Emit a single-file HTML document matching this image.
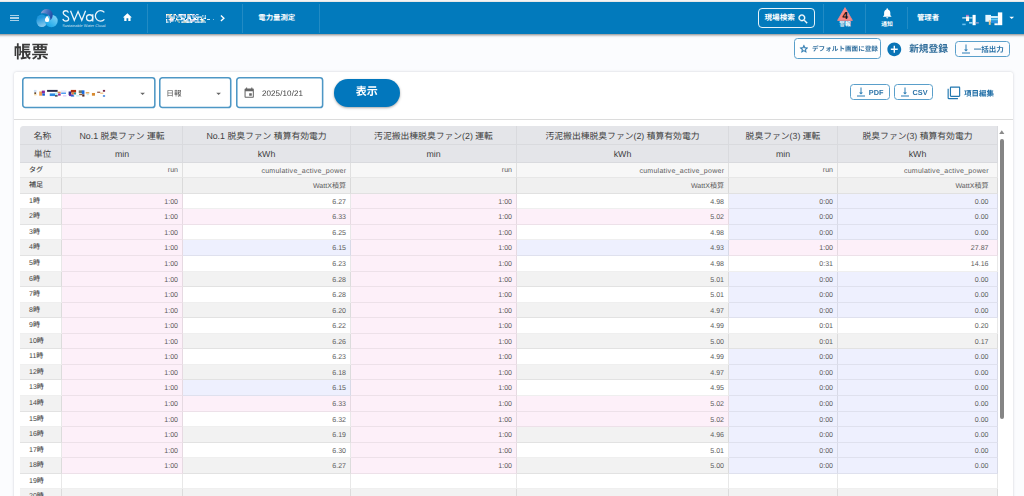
<!DOCTYPE html>
<html lang="ja"><head><meta charset="utf-8"><title>帳票</title><style>
html,body{margin:0;padding:0}
body{text-rendering:geometricPrecision;width:1024px;height:496px;overflow:hidden;position:relative;background:#fbfcfe;font-family:"Liberation Sans","Noto Sans CJK JP",sans-serif;color:#333}
#pg{position:absolute;left:-12px;top:-12px;width:1048px;height:520px;overflow:hidden;filter:blur(.45px)}
#in{position:absolute;left:12px;top:12px;width:1024px;height:496px}
.a{position:absolute;box-sizing:border-box}
.ic{position:absolute;display:block;overflow:visible}
.cj{display:inline-block;overflow:visible;flex:none;white-space:nowrap;line-height:1.2;font-family:"Liberation Sans","Noto Sans CJK JP",sans-serif}
.h{font-size:0;color:transparent}
.w{white-space:nowrap;line-height:1.2}
.c{display:flex;align-items:center;justify-content:center;white-space:nowrap}
#hs{left:-20px;top:2.4px;width:1064px;height:31.2px;background:#027abc;box-shadow:0 1px 2.6px rgba(0,0,0,.5)}
#hdr{left:0;top:2.4px;width:1024px;height:31.2px;background:#027abc}
#hdr>*{margin-top:-2.4px}
#swac{font-size:16.2px;color:#fff;letter-spacing:-.55px;line-height:18px;white-space:nowrap}
#swsub{font-size:3.9px;color:rgba(255,255,255,.8);line-height:4px;white-space:nowrap;letter-spacing:.02px}
.btn{border:1px solid #5a9fca;border-radius:3.5px}
.th{padding-top:1px;background:#e4e5e9;border-right:1px solid #d9dade;border-bottom:1px solid #d9dade;color:#3f3f3f;font-size:8.9px}
.td{display:flex;align-items:center;justify-content:flex-end;white-space:nowrap;padding:2.2px 4px 0 0;font-size:7.05px;color:#5c5c5c;border-right:1px solid rgba(0,0,0,.085);border-bottom:1px solid rgba(0,0,0,.062)}
.td.l{justify-content:flex-start;padding:2.2px 0 0 9px;color:#484848}
.td.z{padding-right:8.5px}
.tg{letter-spacing:.25px;margin-right:-.25px}
</style></head>
<body>
<div id="pg"><div id="in">
<div class="a" style="left:-12.00px;top:-12.00px;width:1048.00px;height:14.40px;background:#f8f8f8"></div>
<div id="hs" class="a"></div>
<div id="hdr" class="a"><div class="a" style="left:9.80px;top:14.90px;width:9.00px;height:1.20px;background:rgba(255,255,255,.66)"></div><div class="a" style="left:9.80px;top:17.35px;width:9.00px;height:1.20px;background:rgba(255,255,255,.66)"></div><div class="a" style="left:9.80px;top:19.80px;width:9.00px;height:1.20px;background:rgba(255,255,255,.66)"></div><svg class="ic" style="left:34px;top:6px" width="28" height="24" viewBox="0 0 28 24">
<defs>
<linearGradient id="lg1" x1="0" y1="0" x2="1" y2="0.3"><stop offset="0" stop-color="#9fb0dc"/><stop offset="0.55" stop-color="#4876c4"/><stop offset="1" stop-color="#2450a8"/></linearGradient>
<linearGradient id="lg2" x1="0.3" y1="0" x2="0.6" y2="1"><stop offset="0.25" stop-color="#1f97dc"/><stop offset="1" stop-color="#8fcdef"/></linearGradient>
<linearGradient id="lg3" x1="1" y1="0" x2="0.2" y2="1"><stop offset="0" stop-color="#8fd8f8"/><stop offset="1" stop-color="#12a4e8"/></linearGradient>
</defs>
<ellipse cx="7.8" cy="14.7" rx="5.4" ry="6.3" fill="url(#lg2)"/>
<ellipse cx="17.3" cy="15" rx="6.4" ry="6.2" fill="url(#lg3)"/>
<path d="M6.8 7.5C7.6 4.6 10.2 3 12.9 3.1C16.6 3.3 19 6.2 18.7 9.6C18.5 11.6 17.6 13.2 16.3 14.2C16.6 11.6 15.6 9.6 13.6 8.4C11.6 7.2 9 7 6.8 7.5Z" fill="url(#lg1)"/>
<path d="M13.05 9.8C14.1 11.6 15.2 12.6 15.2 13.9A2.15 2.2 0 0 1 10.9 13.9C10.9 12.6 12 11.6 13.05 9.8Z" fill="#fff"/>
</svg><svg class="ic" style="left:60px;top:6px" width="48" height="18" viewBox="0 0 48 18" fill="none" stroke="#eaf4fb" stroke-width="1.3" stroke-linecap="butt" stroke-linejoin="miter" aria-label="SWaC">
<path d="M8.4 6.6C8 5.4 7 4.75 5.7 4.75C4.2 4.75 3.2 5.75 3.2 7.1C3.2 8.6 4.4 9.2 5.9 9.9C7.5 10.6 8.7 11.3 8.7 12.8C8.7 14.2 7.5 15.05 5.8 15.05C4.3 15.05 3.2 14.2 2.9 12.8"/>
<path d="M10.5 4.7L14.3 14.2L18.05 5.6L21.8 14.2L25.6 4.7"/>
<circle cx="29.6" cy="11.85" r="3.1"/><path d="M32.75 8.3V15.4"/>
<path d="M44.4 6.4A5.2 5.2 0 1 0 44.4 13.4"/>
</svg><span class="h">SWaC</span><div class="a" id="swsub" style="left:62.2px;top:23.6px">Sustainable Water Cloud</div><svg class="ic" style="left:121.60px;top:12.45px" width="10.80" height="10.80" viewBox="0 0 24 24" fill="#fff" ><path d="M10 20v-6h4v6h5v-8h3L12 3 2 12h3v8z"/></svg><div class="a" style="left:147.10px;top:3.50px;width:1.00px;height:29.00px;background:rgba(255,255,255,.13)"></div><div class="a" style="left:242.30px;top:3.50px;width:1.00px;height:29.00px;background:rgba(255,255,255,.13)"></div><div class="a" style="left:319.00px;top:3.50px;width:1.00px;height:29.00px;background:rgba(255,255,255,.13)"></div><div class="a" style="left:823.30px;top:3.50px;width:1.00px;height:29.00px;background:rgba(255,255,255,.13)"></div><div class="a" style="left:865.10px;top:3.50px;width:1.00px;height:29.00px;background:rgba(255,255,255,.13)"></div><div class="a" style="left:907.10px;top:7.00px;width:1.00px;height:22.30px;background:rgba(255,255,255,.13)"></div><svg class="ic" style="left:166px;top:14.4px" width="40" height="9.4"><rect x="0.00" y="0.00" width="2.50" height="1.25" fill="#fff"/><rect x="1.25" y="0.00" width="2.50" height="1.25" fill="#f4e6b8"/><rect x="3.75" y="0.00" width="1.25" height="1.25" fill="#f4e6b8"/><rect x="5.00" y="0.00" width="1.25" height="1.25" fill="#fff"/><rect x="7.50" y="0.00" width="2.50" height="1.25" fill="#f4e6b8"/><rect x="8.75" y="0.00" width="1.25" height="1.25" fill="#fff"/><rect x="12.50" y="0.00" width="2.50" height="1.25" fill="#fff"/><rect x="15.00" y="0.00" width="2.50" height="1.25" fill="#fff"/><rect x="16.25" y="0.00" width="1.25" height="1.25" fill="#e4f1fa"/><rect x="17.50" y="0.00" width="2.50" height="1.25" fill="#f6d9ec"/><rect x="21.25" y="0.00" width="2.50" height="1.25" fill="#f4e6b8"/><rect x="23.75" y="0.00" width="1.25" height="1.25" fill="#fff"/><rect x="25.00" y="0.00" width="1.25" height="1.25" fill="#fff"/><rect x="26.25" y="0.00" width="2.50" height="1.25" fill="#f6d9ec"/><rect x="30.00" y="0.00" width="1.25" height="1.25" fill="#bfe0f4"/><rect x="31.25" y="0.00" width="1.25" height="1.25" fill="#fff"/><rect x="0.00" y="1.25" width="1.25" height="1.25" fill="#fff"/><rect x="2.50" y="1.25" width="2.50" height="1.25" fill="#e4f1fa"/><rect x="3.75" y="1.25" width="1.25" height="1.25" fill="#f4e6b8"/><rect x="7.50" y="1.25" width="1.25" height="1.25" fill="#f6d9ec"/><rect x="10.00" y="1.25" width="1.25" height="1.25" fill="#f6d9ec"/><rect x="12.50" y="1.25" width="2.50" height="1.25" fill="#fff"/><rect x="13.75" y="1.25" width="2.50" height="1.25" fill="#bfe0f4"/><rect x="17.50" y="1.25" width="1.25" height="1.25" fill="#fff"/><rect x="18.75" y="1.25" width="1.25" height="1.25" fill="#fff"/><rect x="21.25" y="1.25" width="1.25" height="1.25" fill="#f6d9ec"/><rect x="22.50" y="1.25" width="1.25" height="1.25" fill="#fff"/><rect x="26.25" y="1.25" width="1.25" height="1.25" fill="#fff"/><rect x="28.75" y="1.25" width="1.25" height="1.25" fill="#f6d9ec"/><rect x="36.25" y="1.25" width="1.25" height="1.25" fill="#fff"/><rect x="38.75" y="1.25" width="1.25" height="1.25" fill="#e4f1fa"/><rect x="0.00" y="2.50" width="1.25" height="1.25" fill="#f6d9ec"/><rect x="2.50" y="2.50" width="1.25" height="1.25" fill="#fff"/><rect x="3.75" y="2.50" width="2.50" height="1.25" fill="#bfe0f4"/><rect x="5.00" y="2.50" width="2.50" height="1.25" fill="#bfe0f4"/><rect x="7.50" y="2.50" width="1.25" height="1.25" fill="#fff"/><rect x="11.25" y="2.50" width="1.25" height="1.25" fill="#e4f1fa"/><rect x="13.75" y="2.50" width="2.50" height="1.25" fill="#bfe0f4"/><rect x="15.00" y="2.50" width="1.25" height="1.25" fill="#bfe0f4"/><rect x="18.75" y="2.50" width="1.25" height="1.25" fill="#fff"/><rect x="21.25" y="2.50" width="2.50" height="1.25" fill="#fff"/><rect x="22.50" y="2.50" width="1.25" height="1.25" fill="#e4f1fa"/><rect x="23.75" y="2.50" width="1.25" height="1.25" fill="#f6d9ec"/><rect x="26.25" y="2.50" width="2.50" height="1.25" fill="#bfe0f4"/><rect x="30.00" y="2.50" width="1.25" height="1.25" fill="#fff"/><rect x="31.25" y="2.50" width="2.50" height="1.25" fill="#fff"/><rect x="33.75" y="2.50" width="1.25" height="1.25" fill="#fff"/><rect x="35.00" y="2.50" width="1.25" height="1.25" fill="#bfe0f4"/><rect x="38.75" y="2.50" width="1.25" height="1.25" fill="#bfe0f4"/><rect x="3.75" y="3.75" width="1.25" height="1.25" fill="#f6d9ec"/><rect x="5.00" y="3.75" width="1.25" height="1.25" fill="#f4e6b8"/><rect x="6.25" y="3.75" width="1.25" height="1.25" fill="#e4f1fa"/><rect x="7.50" y="3.75" width="1.25" height="1.25" fill="#fff"/><rect x="10.00" y="3.75" width="1.25" height="1.25" fill="#f4e6b8"/><rect x="15.00" y="3.75" width="2.50" height="1.25" fill="#fff"/><rect x="16.25" y="3.75" width="1.25" height="1.25" fill="#e4f1fa"/><rect x="17.50" y="3.75" width="1.25" height="1.25" fill="#fff"/><rect x="21.25" y="3.75" width="1.25" height="1.25" fill="#fff"/><rect x="22.50" y="3.75" width="2.50" height="1.25" fill="#fff"/><rect x="27.50" y="3.75" width="2.50" height="1.25" fill="#fff"/><rect x="28.75" y="3.75" width="1.25" height="1.25" fill="#fff"/><rect x="31.25" y="3.75" width="1.25" height="1.25" fill="#fff"/><rect x="35.00" y="3.75" width="1.25" height="1.25" fill="#f4e6b8"/><rect x="37.50" y="3.75" width="1.25" height="1.25" fill="#fff"/><rect x="38.75" y="3.75" width="1.25" height="1.25" fill="#fff"/><rect x="0.00" y="5.00" width="1.25" height="1.25" fill="#fff"/><rect x="2.50" y="5.00" width="2.50" height="1.25" fill="#f6d9ec"/><rect x="3.75" y="5.00" width="1.25" height="1.25" fill="#fff"/><rect x="5.00" y="5.00" width="2.50" height="1.25" fill="#f6d9ec"/><rect x="6.25" y="5.00" width="1.25" height="1.25" fill="#fff"/><rect x="10.00" y="5.00" width="1.25" height="1.25" fill="#fff"/><rect x="11.25" y="5.00" width="1.25" height="1.25" fill="#fff"/><rect x="12.50" y="5.00" width="1.25" height="1.25" fill="#bfe0f4"/><rect x="13.75" y="5.00" width="1.25" height="1.25" fill="#bfe0f4"/><rect x="15.00" y="5.00" width="1.25" height="1.25" fill="#e4f1fa"/><rect x="16.25" y="5.00" width="1.25" height="1.25" fill="#bfe0f4"/><rect x="17.50" y="5.00" width="1.25" height="1.25" fill="#fff"/><rect x="20.00" y="5.00" width="1.25" height="1.25" fill="#fff"/><rect x="21.25" y="5.00" width="1.25" height="1.25" fill="#f6d9ec"/><rect x="23.75" y="5.00" width="1.25" height="1.25" fill="#fff"/><rect x="25.00" y="5.00" width="1.25" height="1.25" fill="#bfe0f4"/><rect x="26.25" y="5.00" width="2.50" height="1.25" fill="#f6d9ec"/><rect x="27.50" y="5.00" width="1.25" height="1.25" fill="#fff"/><rect x="28.75" y="5.00" width="2.50" height="1.25" fill="#fff"/><rect x="31.25" y="5.00" width="1.25" height="1.25" fill="#fff"/><rect x="33.75" y="5.00" width="2.50" height="1.25" fill="#e4f1fa"/><rect x="35.00" y="5.00" width="2.50" height="1.25" fill="#fff"/><rect x="0.00" y="6.25" width="1.25" height="1.25" fill="#fff"/><rect x="3.75" y="6.25" width="2.50" height="1.25" fill="#fff"/><rect x="5.00" y="6.25" width="1.25" height="1.25" fill="#f6d9ec"/><rect x="6.25" y="6.25" width="1.25" height="1.25" fill="#fff"/><rect x="8.75" y="6.25" width="1.25" height="1.25" fill="#bfe0f4"/><rect x="11.25" y="6.25" width="1.25" height="1.25" fill="#f4e6b8"/><rect x="17.50" y="6.25" width="2.50" height="1.25" fill="#fff"/><rect x="18.75" y="6.25" width="2.50" height="1.25" fill="#fff"/><rect x="21.25" y="6.25" width="1.25" height="1.25" fill="#fff"/><rect x="23.75" y="6.25" width="1.25" height="1.25" fill="#fff"/><rect x="25.00" y="6.25" width="2.50" height="1.25" fill="#f6d9ec"/><rect x="26.25" y="6.25" width="2.50" height="1.25" fill="#f6d9ec"/><rect x="31.25" y="6.25" width="1.25" height="1.25" fill="#f6d9ec"/><rect x="35.00" y="6.25" width="2.50" height="1.25" fill="#f4e6b8"/><rect x="36.25" y="6.25" width="1.25" height="1.25" fill="#fff"/><rect x="37.50" y="6.25" width="1.25" height="1.25" fill="#f4e6b8"/><rect x="0.00" y="7.50" width="1.25" height="1.25" fill="#fff"/><rect x="1.25" y="7.50" width="1.25" height="1.25" fill="#fff"/><rect x="3.75" y="7.50" width="1.25" height="1.25" fill="#e4f1fa"/><rect x="12.50" y="7.50" width="1.25" height="1.25" fill="#f4e6b8"/><rect x="15.00" y="7.50" width="2.50" height="1.25" fill="#bfe0f4"/><rect x="16.25" y="7.50" width="1.25" height="1.25" fill="#fff"/><rect x="17.50" y="7.50" width="2.50" height="1.25" fill="#f4e6b8"/><rect x="20.00" y="7.50" width="2.50" height="1.25" fill="#fff"/><rect x="21.25" y="7.50" width="2.50" height="1.25" fill="#fff"/><rect x="23.75" y="7.50" width="2.50" height="1.25" fill="#fff"/><rect x="25.00" y="7.50" width="1.25" height="1.25" fill="#fff"/><rect x="28.75" y="7.50" width="1.25" height="1.25" fill="#e4f1fa"/><rect x="30.00" y="7.50" width="1.25" height="1.25" fill="#e4f1fa"/><rect x="31.25" y="7.50" width="2.50" height="1.25" fill="#fff"/><rect x="33.75" y="7.50" width="1.25" height="1.25" fill="#bfe0f4"/><rect x="35.00" y="7.50" width="1.25" height="1.25" fill="#fff"/><rect x="36.25" y="7.50" width="1.25" height="1.25" fill="#e4f1fa"/><rect x="37.50" y="7.50" width="1.25" height="1.25" fill="#bfe0f4"/><rect x="38.75" y="7.50" width="1.25" height="1.25" fill="#bfe0f4"/></svg><div class="a" style="left:206.80px;top:18.70px;width:3.20px;height:1.20px;background:rgba(255,255,255,.85)"></div><div class="a" style="left:212.60px;top:18.70px;width:1.20px;height:1.20px;background:rgba(255,255,255,.5)"></div><svg class="ic" style="left:219px;top:14px" width="8" height="9" viewBox="0 0 8 9"><path d="M1.9 1.5L4.9 4.2L1.9 6.9" fill="none" stroke="#fff" stroke-width="1.35"/></svg><div class="a c" style="left:243.00px;top:2.90px;width:67.50px;height:31.20px;"><span class="cj" style="font-size:7.4px;color:#fff;font-weight:bold">電力量測定</span></div><div class="a" style="left:757.80px;top:7.90px;width:57.00px;height:19.90px;border:1px solid rgba(255,255,255,.9);border-radius:4px;box-sizing:border-box"></div><div class="a c" style="left:764.40px;top:7.90px;width:30.60px;height:19.90px;"><span class="cj" style="font-size:7.6px;color:#fff;font-weight:bold">現場検索</span></div><svg class="ic" style="left:796.50px;top:12.66px" width="12.30" height="12.30" viewBox="0 0 24 24" fill="#fff" stroke="#fff" stroke-width=".7"><path d="M15.5 14h-.79l-.28-.27C15.41 12.59 16 11.11 16 9.5 16 5.91 13.09 3 9.5 3S3 5.91 3 9.5 5.91 16 9.5 16c1.61 0 3.09-.59 4.23-1.57l.27.28v.79l5 4.99L20.49 19l-4.99-5zm-6 0C7.01 14 5 11.99 5 9.5S7.01 5 9.5 5 14 7.01 14 9.5 11.99 14 9.5 14z"/></svg><svg class="ic" style="left:836px;top:6px" width="18" height="16" viewBox="0 0 18 16"><path d="M9 1.6L16.4 14.4H1.6Z" fill="#f88888" stroke="#f88888" stroke-width="0.8" stroke-linejoin="round"/></svg><div class="a c" style="left:836.00px;top:10.50px;width:18.00px;height:11.60px;"><b style="font-size:10.3px;color:#111">4</b></div><div class="a c" style="left:830.00px;top:22.30px;width:30.00px;height:7.00px;"><span class="cj" style="font-size:5.8px;color:#fff;font-weight:bold">警報</span></div><svg class="ic" style="left:880.80px;top:7.30px" width="12.45" height="12.45" viewBox="0 0 24 24" fill="#fff" ><path d="M12 22c1.1 0 2-.9 2-2h-4c0 1.1.89 2 2 2zm6-6v-5c0-3.07-1.64-5.64-4.5-6.32V4c0-.83-.67-1.5-1.5-1.5s-1.5.67-1.5 1.5v.68C7.63 5.36 6 7.92 6 11v5l-2 2v1h16v-1l-2-2z"/></svg><div class="a c" style="left:872.00px;top:22.30px;width:30.00px;height:7.00px;"><span class="cj" style="font-size:5.8px;color:#fff;font-weight:bold">通知</span></div><div class="a c" style="left:912.00px;top:2.40px;width:32.00px;height:31.20px;"><span class="cj" style="font-size:7.4px;color:#fff;font-weight:bold">管理者</span></div><svg class="ic" style="left:958px;top:10px;filter:blur(0.35px)" width="48" height="18"><rect x="8.00" y="4.88" width="2.81" height="1.56" fill="#c070c0"/><rect x="4.25" y="7.06" width="3.75" height="1.56" fill="#a8d8f0"/><rect x="8.00" y="6.44" width="3.12" height="4.69" fill="#fff8f0"/><rect x="11.12" y="7.06" width="3.44" height="1.56" fill="#8ad0f0"/><rect x="14.56" y="4.88" width="3.12" height="10.31" fill="#fff"/><rect x="11.12" y="12.06" width="3.44" height="1.56" fill="#a0d8f5"/><rect x="17.69" y="12.06" width="3.12" height="1.56" fill="#8a9ac8"/><rect x="4.25" y="13.62" width="3.44" height="1.56" fill="#6ac0f0"/><rect x="27.38" y="4.88" width="5.62" height="6.88" fill="#e6f5ff"/><rect x="33.00" y="6.00" width="6.88" height="2.00" fill="#d0ecfa"/><rect x="33.00" y="8.50" width="6.88" height="2.00" fill="#60c8f8"/><rect x="33.00" y="11.00" width="6.88" height="2.00" fill="#2a90e0"/><rect x="39.88" y="2.38" width="4.38" height="12.81" fill="#fff"/><rect x="36.44" y="13.31" width="3.44" height="1.88" fill="#fff"/><rect x="30.81" y="10.19" width="1.88" height="4.69" fill="#e8c890"/></svg><svg class="ic" style="left:1006.40px;top:12.20px" width="11.40" height="11.40" viewBox="0 0 24 24" fill="#fff" ><path d="M7 10l5 5 5-5z"/></svg></div>
<div class="a" style="left:13.7px;top:39.8px;height:24px;line-height:24px;white-space:nowrap"><span class="cj" style="font-size:17.5px;color:#3a3a3a;font-weight:bold;line-height:24px">帳票</span></div>
<div class="a btn" style="left:793.60px;top:38.00px;width:87.70px;height:21.40px;background:#fff"></div>
<svg class="ic" style="left:799.20px;top:43.90px" width="9.80" height="9.80" viewBox="0 0 24 24" fill="#2373ab" stroke="#2373ab" stroke-width=".8"><path d="M22 9.24l-7.19-.62L12 2 9.19 8.63 2 9.24l5.46 4.73L5.82 21 12 17.27 18.18 21l-1.63-7.03L22 9.24zM12 15.4l-3.76 2.27 1-4.28-3.32-2.88 4.38-.38L12 6.1l1.71 4.04 4.38.38-3.32 2.88 1 4.28L12 15.4z"/></svg>
<div class="a c" style="left:811.00px;top:38.80px;width:68.00px;height:21.40px;"><span class="cj" style="font-size:6.6px;color:#3472a0;font-weight:bold">デフォルト画面に登録</span></div>
<svg class="ic" style="left:885.90px;top:40.50px" width="16.60" height="16.60" viewBox="0 0 24 24" fill="#0a74b6" ><path d="M12 2C6.48 2 2 6.48 2 12s4.48 10 10 10 10-4.48 10-10S17.52 2 12 2zm5 11h-4v4h-2v-4H7v-2h4V7h2v4h4v2z"/></svg>
<div class="a c" style="left:907.00px;top:38.60px;width:43.00px;height:22.40px;"><span class="cj" style="font-size:9.7px;color:#316e9b;font-weight:bold">新規登録</span></div>
<div class="a btn" style="left:954.80px;top:41.30px;width:55.50px;height:15.80px;"></div>
<svg class="ic" style="left:960.30px;top:42.90px" width="12.00" height="12.00" viewBox="0 0 24 24" fill="#2b7db5" ><path d="M16 13h-3V3h-2v10H8l4 4 4-4zM4 19v2h16v-2H4z"/></svg>
<div class="a c" style="left:972.00px;top:41.70px;width:33.60px;height:15.80px;"><span class="cj" style="font-size:7.5px;color:#2d74a8;font-weight:bold">一括出力</span></div>
<div class="a" style="left:13.80px;top:71.50px;width:999.10px;height:448.50px;background:#fff;border-radius:2.5px;box-shadow:0 0 2.5px rgba(60,70,90,.26)"></div>
<svg class="ic" style="left:21.90px;top:77.15px" width="133.60" height="31.30"><rect x="0.78" y="0.78" width="132.05" height="29.75" rx="2.6" fill="none" stroke="#4e97c5" stroke-width="1.55"/></svg>
<svg class="ic" style="left:30px;top:86px;filter:blur(0.35px)" width="80" height="14"><rect x="3.91" y="3.91" width="2.64" height="2.46" fill="#cfe0f5"/><rect x="4.35" y="6.37" width="1.76" height="1.58" fill="#5a3a20"/><rect x="4.08" y="7.95" width="2.46" height="1.41" fill="#f5d9a0"/><rect x="9.18" y="5.49" width="2.81" height="4.22" fill="#f0a050"/><rect x="11.82" y="4.61" width="3.08" height="2.81" fill="#8a2a9a"/><rect x="12.26" y="7.42" width="2.64" height="2.28" fill="#1a5fd0"/><rect x="17.09" y="3.91" width="10.54" height="1.93" fill="#2a2a4a"/><rect x="19.73" y="7.42" width="5.27" height="2.64" fill="#2a8ae0"/><rect x="25.00" y="6.54" width="2.64" height="2.64" fill="#b0f0f8"/><rect x="25.00" y="9.18" width="2.64" height="1.41" fill="#334"/><rect x="27.63" y="5.67" width="3.08" height="1.41" fill="#e09040"/><rect x="28.07" y="7.42" width="2.64" height="2.20" fill="#a02a90"/><rect x="30.71" y="4.35" width="5.71" height="2.20" fill="#e8e8f8"/><rect x="31.15" y="6.54" width="4.83" height="1.41" fill="#4a9af0"/><rect x="32.91" y="9.18" width="3.51" height="1.32" fill="#e0d0f8"/><rect x="40.82" y="3.91" width="5.27" height="2.64" fill="#b03010"/><rect x="38.62" y="5.49" width="2.64" height="3.69" fill="#2a2a8a"/><rect x="41.52" y="6.37" width="2.37" height="2.11" fill="#e08030"/><rect x="43.89" y="6.54" width="2.20" height="1.93" fill="#2a9a9a"/><rect x="39.06" y="8.48" width="4.39" height="1.58" fill="#7a2aa0"/><rect x="40.82" y="9.36" width="3.34" height="1.23" fill="#1a7ae0"/><rect x="48.72" y="4.35" width="3.51" height="2.72" fill="#6a7a6a"/><rect x="51.80" y="4.35" width="2.64" height="3.60" fill="#1a6ae0"/><rect x="49.16" y="7.78" width="3.08" height="1.41" fill="#8a5a3a"/><rect x="52.24" y="8.30" width="2.20" height="2.28" fill="#4a2a2a"/><rect x="46.26" y="9.18" width="3.34" height="1.32" fill="#c0f0f8"/><rect x="55.75" y="6.11" width="3.51" height="1.41" fill="#e0a050"/><rect x="56.63" y="7.86" width="2.20" height="1.32" fill="#c0e8f0"/><rect x="61.91" y="6.98" width="3.08" height="2.72" fill="#d88a30"/><rect x="67.18" y="5.67" width="3.08" height="1.14" fill="#8a4a3a"/><rect x="70.25" y="6.54" width="3.08" height="1.41" fill="#f5c890"/><rect x="72.89" y="3.91" width="2.20" height="1.85" fill="#7a2a4a"/><rect x="72.89" y="9.18" width="2.20" height="1.58" fill="#4a8ae0"/></svg>
<svg class="ic" style="left:136.60px;top:87.60px" width="11.20" height="11.20" viewBox="0 0 24 24" fill="#666" ><path d="M7 10l5 5 5-5z"/></svg>
<svg class="ic" style="left:159.40px;top:77.15px" width="72.50" height="31.30"><rect x="0.78" y="0.78" width="70.95" height="29.75" rx="2.6" fill="none" stroke="#4e97c5" stroke-width="1.55"/></svg>
<div class="a" style="left:166.30px;top:78.20px;width:33.70px;height:30.50px;display:flex;align-items:center"><span class="cj" style="font-size:7.6px;color:#444">日報</span></div>
<svg class="ic" style="left:212.80px;top:87.60px" width="11.20" height="11.20" viewBox="0 0 24 24" fill="#666" ><path d="M7 10l5 5 5-5z"/></svg>
<svg class="ic" style="left:235.70px;top:77.15px" width="87.40" height="31.30"><rect x="0.78" y="0.78" width="85.85" height="29.75" rx="2.6" fill="none" stroke="#4e97c5" stroke-width="1.55"/></svg>
<svg class="ic" style="left:243.00px;top:86.60px" width="12.40" height="12.40" viewBox="0 0 24 24" fill="#666" ><path d="M17 12h-5v5h5v-5zM16 1v2H8V1H6v2H5c-1.11 0-1.99.9-1.99 2L3 19c0 1.1.89 2 2 2h14c1.1 0 2-.9 2-2V5c0-1.1-.9-2-2-2h-1V1h-2zm3 18H5V8h14v11z"/></svg>
<div class="a" style="left:261.90px;top:78.40px;width:48.10px;height:30.50px;display:flex;align-items:center"><span style="font-size:8.05px;letter-spacing:.1px;color:#444">2025/10/21</span></div>
<div class="a c" style="left:333.80px;top:78.50px;width:66.00px;height:28.70px;background:#0277bd;border-radius:15px;box-shadow:0 1px 2.5px rgba(0,0,0,.35)"><span class="cj" style="font-size:11px;color:#fff;font-weight:bold">表示</span></div>
<div class="a btn" style="left:850.30px;top:83.90px;width:39.40px;height:16.30px;"></div>
<svg class="ic" style="left:855.40px;top:86.20px" width="12.00" height="12.00" viewBox="0 0 24 24" fill="#2b7db5" ><path d="M16 13h-3V3h-2v10H8l4 4 4-4zM4 19v2h16v-2H4z"/></svg>
<div class="a c" style="left:866.30px;top:84.60px;width:19.70px;height:16.40px;"><b style="font-size:7.3px;color:#2d74a8">PDF</b></div>
<div class="a btn" style="left:894.30px;top:83.90px;width:38.70px;height:16.30px;"></div>
<svg class="ic" style="left:899.40px;top:86.20px" width="12.00" height="12.00" viewBox="0 0 24 24" fill="#2b7db5" ><path d="M16 13h-3V3h-2v10H8l4 4 4-4zM4 19v2h16v-2H4z"/></svg>
<div class="a c" style="left:910.20px;top:84.60px;width:19.80px;height:16.40px;"><b style="font-size:7.3px;color:#2d74a8">CSV</b></div>
<svg class="ic" style="left:946.60px;top:86.00px" width="13.80" height="13.80" viewBox="0 0 24 24" fill="#2177b0" ><path d="M3 5H1v16c0 1.1.9 2 2 2h16v-2H3V5zm18-4H7c-1.1 0-2 .9-2 2v14c0 1.1.9 2 2 2h14c1.1 0 2-.9 2-2V3c0-1.1-.9-2-2-2zm0 16H7V3h14v14z"/></svg>
<div class="a c" style="left:963.80px;top:85.20px;width:30.20px;height:16.40px;"><span class="cj" style="font-size:7.5px;color:#1f6ea6;font-weight:bold">項目編集</span></div>
<div class="a" style="left:13.70px;top:119.10px;width:999.20px;height:1.00px;background:#dcdcdc"></div>
<div class="a" style="left:19.50px;top:125.90px;width:986.90px;height:394.10px;border:1px solid #ececec;border-radius:4px;box-sizing:border-box;background:#fff"></div><div class="a c th" style="left:20.00px;top:126.00px;width:42.00px;height:19.00px;border-top-left-radius:3.5px;padding-left:4px;padding-top:2.2px;"><span class="w"><span class="cj" style="font-size:8.8px;color:#3f3f3f">名称</span></span></div><div class="a c th" style="left:62.00px;top:126.00px;width:121.00px;height:19.00px;padding-top:2.2px;"><span class="w"><span style="font-size:8.8px">No.1&nbsp;</span><span class="cj" style="font-size:8.8px;color:#3f3f3f">脱臭ファン 運転</span></span></div><div class="a c th" style="left:183.00px;top:126.00px;width:168.00px;height:19.00px;padding-top:2.2px;"><span class="w"><span style="font-size:8.8px">No.1&nbsp;</span><span class="cj" style="font-size:8.8px;color:#3f3f3f">脱臭ファン 積算有効電力</span></span></div><div class="a c th" style="left:351.00px;top:126.00px;width:166.00px;height:19.00px;padding-top:2.2px;"><span class="w"><span class="cj" style="font-size:8.8px;color:#3f3f3f">汚泥搬出棟脱臭ファン</span><span style="font-size:8.8px">(2)&nbsp;</span><span class="cj" style="font-size:8.8px;color:#3f3f3f">運転</span></span></div><div class="a c th" style="left:517.00px;top:126.00px;width:212.00px;height:19.00px;padding-top:2.2px;"><span class="w"><span class="cj" style="font-size:8.8px;color:#3f3f3f">汚泥搬出棟脱臭ファン</span><span style="font-size:8.8px">(2)&nbsp;</span><span class="cj" style="font-size:8.8px;color:#3f3f3f">積算有効電力</span></span></div><div class="a c th" style="left:729.00px;top:126.00px;width:109.00px;height:19.00px;padding-top:2.2px;"><span class="w"><span class="cj" style="font-size:8.8px;color:#3f3f3f">脱臭ファン</span><span style="font-size:8.8px">(3)&nbsp;</span><span class="cj" style="font-size:8.8px;color:#3f3f3f">運転</span></span></div><div class="a c th" style="left:838.00px;top:126.00px;width:160.00px;height:19.00px;padding-top:2.2px;"><span class="w"><span class="cj" style="font-size:8.8px;color:#3f3f3f">脱臭ファン</span><span style="font-size:8.8px">(3)&nbsp;</span><span class="cj" style="font-size:8.8px;color:#3f3f3f">積算有効電力</span></span></div><div class="a c th" style="left:20.00px;top:145.00px;width:42.00px;height:18.00px;padding-left:4px;"><span class="w"><span class="cj" style="font-size:8.8px;color:#3f3f3f">単位</span></span></div><div class="a c th" style="left:62.00px;top:145.00px;width:121.00px;height:18.00px;"><span class="w"><span style="font-size:8.8px">min</span></span></div><div class="a c th" style="left:183.00px;top:145.00px;width:168.00px;height:18.00px;"><span class="w"><span style="font-size:8.8px">kWh</span></span></div><div class="a c th" style="left:351.00px;top:145.00px;width:166.00px;height:18.00px;"><span class="w"><span style="font-size:8.8px">min</span></span></div><div class="a c th" style="left:517.00px;top:145.00px;width:212.00px;height:18.00px;"><span class="w"><span style="font-size:8.8px">kWh</span></span></div><div class="a c th" style="left:729.00px;top:145.00px;width:109.00px;height:18.00px;"><span class="w"><span style="font-size:8.8px">min</span></span></div><div class="a c th" style="left:838.00px;top:145.00px;width:160.00px;height:18.00px;"><span class="w"><span style="font-size:8.8px">kWh</span></span></div><div class="a td l" style="left:20.00px;top:163.00px;width:42.00px;height:15.00px;background:#f7f7f7"><span class="w"><span class="cj" style="font-size:7.05px;color:#484848;font-weight:500">タグ</span></span></div><div class="a td" style="left:62.00px;top:163.00px;width:121.00px;height:15.00px;background:#f7f7f7"><span class="w"><span style="font-size:7.05px">run</span></span></div><div class="a td" style="left:183.00px;top:163.00px;width:168.00px;height:15.00px;background:#f7f7f7"><span class="tg">cumulative_active_power</span></div><div class="a td" style="left:351.00px;top:163.00px;width:166.00px;height:15.00px;background:#f7f7f7"><span class="w"><span style="font-size:7.05px">run</span></span></div><div class="a td" style="left:517.00px;top:163.00px;width:212.00px;height:15.00px;background:#f7f7f7"><span class="tg">cumulative_active_power</span></div><div class="a td" style="left:729.00px;top:163.00px;width:109.00px;height:15.00px;background:#f7f7f7"><span class="w"><span style="font-size:7.05px">run</span></span></div><div class="a td z" style="left:838.00px;top:163.00px;width:160.00px;height:15.00px;background:#f7f7f7"><span class="tg">cumulative_active_power</span></div><div class="a td l" style="left:20.00px;top:178.00px;width:42.00px;height:16.00px;background:#f0f0f0"><span class="w"><span class="cj" style="font-size:7.05px;color:#484848;font-weight:500">補足</span></span></div><div class="a td" style="left:62.00px;top:178.00px;width:121.00px;height:16.00px;background:#f0f0f0;padding-top:3.4px"><span class="w"></span></div><div class="a td" style="left:183.00px;top:178.00px;width:168.00px;height:16.00px;background:#f0f0f0;padding-top:3.4px"><span class="w"><span style="font-size:7.05px">WattX</span><span class="cj" style="font-size:7.05px;color:#595959">積算</span></span></div><div class="a td" style="left:351.00px;top:178.00px;width:166.00px;height:16.00px;background:#f0f0f0;padding-top:3.4px"><span class="w"></span></div><div class="a td" style="left:517.00px;top:178.00px;width:212.00px;height:16.00px;background:#f0f0f0;padding-top:3.4px"><span class="w"><span style="font-size:7.05px">WattX</span><span class="cj" style="font-size:7.05px;color:#595959">積算</span></span></div><div class="a td" style="left:729.00px;top:178.00px;width:109.00px;height:16.00px;background:#f0f0f0;padding-top:3.4px"><span class="w"></span></div><div class="a td z" style="left:838.00px;top:178.00px;width:160.00px;height:16.00px;background:#f0f0f0;padding-top:3.4px"><span class="w"><span style="font-size:7.05px">WattX</span><span class="cj" style="font-size:7.05px;color:#595959">積算</span></span></div><div class="a td l" style="left:20.00px;top:194.00px;width:42.00px;height:15.00px;background:#fff"><span class="w">1<span class="cj" style="font-size:7.05px;color:#484848;font-weight:500">時</span></span></div><div class="a td" style="left:62.00px;top:194.00px;width:121.00px;height:15.00px;background:#fdf0f9">1:00</div><div class="a td" style="left:183.00px;top:194.00px;width:168.00px;height:15.00px;background:#fff">6.27</div><div class="a td" style="left:351.00px;top:194.00px;width:166.00px;height:15.00px;background:#fdf0f9">1:00</div><div class="a td" style="left:517.00px;top:194.00px;width:212.00px;height:15.00px;background:#fff">4.98</div><div class="a td" style="left:729.00px;top:194.00px;width:109.00px;height:15.00px;background:#eef0fe">0:00</div><div class="a td z" style="left:838.00px;top:194.00px;width:160.00px;height:15.00px;background:#eef0fe">0.00</div><div class="a td l" style="left:20.00px;top:209.00px;width:42.00px;height:16.00px;background:#f2f2f2"><span class="w">2<span class="cj" style="font-size:7.05px;color:#484848;font-weight:500">時</span></span></div><div class="a td" style="left:62.00px;top:209.00px;width:121.00px;height:16.00px;background:#fdf0f9">1:00</div><div class="a td" style="left:183.00px;top:209.00px;width:168.00px;height:16.00px;background:#fdf0f9">6.33</div><div class="a td" style="left:351.00px;top:209.00px;width:166.00px;height:16.00px;background:#fdf0f9">1:00</div><div class="a td" style="left:517.00px;top:209.00px;width:212.00px;height:16.00px;background:#fdf0f9">5.02</div><div class="a td" style="left:729.00px;top:209.00px;width:109.00px;height:16.00px;background:#eef0fe">0:00</div><div class="a td z" style="left:838.00px;top:209.00px;width:160.00px;height:16.00px;background:#eef0fe">0.00</div><div class="a td l" style="left:20.00px;top:225.00px;width:42.00px;height:15.00px;background:#fff"><span class="w">3<span class="cj" style="font-size:7.05px;color:#484848;font-weight:500">時</span></span></div><div class="a td" style="left:62.00px;top:225.00px;width:121.00px;height:15.00px;background:#fdf0f9">1:00</div><div class="a td" style="left:183.00px;top:225.00px;width:168.00px;height:15.00px;background:#fff">6.25</div><div class="a td" style="left:351.00px;top:225.00px;width:166.00px;height:15.00px;background:#fdf0f9">1:00</div><div class="a td" style="left:517.00px;top:225.00px;width:212.00px;height:15.00px;background:#fff">4.98</div><div class="a td" style="left:729.00px;top:225.00px;width:109.00px;height:15.00px;background:#eef0fe">0:00</div><div class="a td z" style="left:838.00px;top:225.00px;width:160.00px;height:15.00px;background:#eef0fe">0.00</div><div class="a td l" style="left:20.00px;top:240.00px;width:42.00px;height:16.00px;background:#f2f2f2"><span class="w">4<span class="cj" style="font-size:7.05px;color:#484848;font-weight:500">時</span></span></div><div class="a td" style="left:62.00px;top:240.00px;width:121.00px;height:16.00px;background:#fdf0f9">1:00</div><div class="a td" style="left:183.00px;top:240.00px;width:168.00px;height:16.00px;background:#eef0fe">6.15</div><div class="a td" style="left:351.00px;top:240.00px;width:166.00px;height:16.00px;background:#fdf0f9">1:00</div><div class="a td" style="left:517.00px;top:240.00px;width:212.00px;height:16.00px;background:#eef0fe">4.93</div><div class="a td" style="left:729.00px;top:240.00px;width:109.00px;height:16.00px;background:#fdf0f9">1:00</div><div class="a td z" style="left:838.00px;top:240.00px;width:160.00px;height:16.00px;background:#fdf0f9">27.87</div><div class="a td l" style="left:20.00px;top:256.00px;width:42.00px;height:16.00px;background:#fff"><span class="w">5<span class="cj" style="font-size:7.05px;color:#484848;font-weight:500">時</span></span></div><div class="a td" style="left:62.00px;top:256.00px;width:121.00px;height:16.00px;background:#fdf0f9">1:00</div><div class="a td" style="left:183.00px;top:256.00px;width:168.00px;height:16.00px;background:#fff">6.23</div><div class="a td" style="left:351.00px;top:256.00px;width:166.00px;height:16.00px;background:#fdf0f9">1:00</div><div class="a td" style="left:517.00px;top:256.00px;width:212.00px;height:16.00px;background:#fff">4.98</div><div class="a td" style="left:729.00px;top:256.00px;width:109.00px;height:16.00px;background:#fff">0:31</div><div class="a td z" style="left:838.00px;top:256.00px;width:160.00px;height:16.00px;background:#fff">14.16</div><div class="a td l" style="left:20.00px;top:272.00px;width:42.00px;height:15.00px;background:#f2f2f2"><span class="w">6<span class="cj" style="font-size:7.05px;color:#484848;font-weight:500">時</span></span></div><div class="a td" style="left:62.00px;top:272.00px;width:121.00px;height:15.00px;background:#fdf0f9">1:00</div><div class="a td" style="left:183.00px;top:272.00px;width:168.00px;height:15.00px;background:#f2f2f2">6.28</div><div class="a td" style="left:351.00px;top:272.00px;width:166.00px;height:15.00px;background:#fdf0f9">1:00</div><div class="a td" style="left:517.00px;top:272.00px;width:212.00px;height:15.00px;background:#f2f2f2">5.01</div><div class="a td" style="left:729.00px;top:272.00px;width:109.00px;height:15.00px;background:#eef0fe">0:00</div><div class="a td z" style="left:838.00px;top:272.00px;width:160.00px;height:15.00px;background:#eef0fe">0.00</div><div class="a td l" style="left:20.00px;top:287.00px;width:42.00px;height:16.00px;background:#fff"><span class="w">7<span class="cj" style="font-size:7.05px;color:#484848;font-weight:500">時</span></span></div><div class="a td" style="left:62.00px;top:287.00px;width:121.00px;height:16.00px;background:#fdf0f9">1:00</div><div class="a td" style="left:183.00px;top:287.00px;width:168.00px;height:16.00px;background:#fff">6.28</div><div class="a td" style="left:351.00px;top:287.00px;width:166.00px;height:16.00px;background:#fdf0f9">1:00</div><div class="a td" style="left:517.00px;top:287.00px;width:212.00px;height:16.00px;background:#fff">5.01</div><div class="a td" style="left:729.00px;top:287.00px;width:109.00px;height:16.00px;background:#eef0fe">0:00</div><div class="a td z" style="left:838.00px;top:287.00px;width:160.00px;height:16.00px;background:#eef0fe">0.00</div><div class="a td l" style="left:20.00px;top:303.00px;width:42.00px;height:15.00px;background:#f2f2f2"><span class="w">8<span class="cj" style="font-size:7.05px;color:#484848;font-weight:500">時</span></span></div><div class="a td" style="left:62.00px;top:303.00px;width:121.00px;height:15.00px;background:#fdf0f9">1:00</div><div class="a td" style="left:183.00px;top:303.00px;width:168.00px;height:15.00px;background:#f2f2f2">6.20</div><div class="a td" style="left:351.00px;top:303.00px;width:166.00px;height:15.00px;background:#fdf0f9">1:00</div><div class="a td" style="left:517.00px;top:303.00px;width:212.00px;height:15.00px;background:#f2f2f2">4.97</div><div class="a td" style="left:729.00px;top:303.00px;width:109.00px;height:15.00px;background:#eef0fe">0:00</div><div class="a td z" style="left:838.00px;top:303.00px;width:160.00px;height:15.00px;background:#eef0fe">0.00</div><div class="a td l" style="left:20.00px;top:318.00px;width:42.00px;height:16.00px;background:#fff"><span class="w">9<span class="cj" style="font-size:7.05px;color:#484848;font-weight:500">時</span></span></div><div class="a td" style="left:62.00px;top:318.00px;width:121.00px;height:16.00px;background:#fdf0f9">1:00</div><div class="a td" style="left:183.00px;top:318.00px;width:168.00px;height:16.00px;background:#fff">6.22</div><div class="a td" style="left:351.00px;top:318.00px;width:166.00px;height:16.00px;background:#fdf0f9">1:00</div><div class="a td" style="left:517.00px;top:318.00px;width:212.00px;height:16.00px;background:#fff">4.99</div><div class="a td" style="left:729.00px;top:318.00px;width:109.00px;height:16.00px;background:#fff">0:01</div><div class="a td z" style="left:838.00px;top:318.00px;width:160.00px;height:16.00px;background:#fff">0.20</div><div class="a td l" style="left:20.00px;top:334.00px;width:42.00px;height:15.00px;background:#f2f2f2"><span class="w">10<span class="cj" style="font-size:7.05px;color:#484848;font-weight:500">時</span></span></div><div class="a td" style="left:62.00px;top:334.00px;width:121.00px;height:15.00px;background:#fdf0f9">1:00</div><div class="a td" style="left:183.00px;top:334.00px;width:168.00px;height:15.00px;background:#f2f2f2">6.26</div><div class="a td" style="left:351.00px;top:334.00px;width:166.00px;height:15.00px;background:#fdf0f9">1:00</div><div class="a td" style="left:517.00px;top:334.00px;width:212.00px;height:15.00px;background:#f2f2f2">5.00</div><div class="a td" style="left:729.00px;top:334.00px;width:109.00px;height:15.00px;background:#f2f2f2">0:01</div><div class="a td z" style="left:838.00px;top:334.00px;width:160.00px;height:15.00px;background:#f2f2f2">0.17</div><div class="a td l" style="left:20.00px;top:349.00px;width:42.00px;height:16.00px;background:#fff"><span class="w">11<span class="cj" style="font-size:7.05px;color:#484848;font-weight:500">時</span></span></div><div class="a td" style="left:62.00px;top:349.00px;width:121.00px;height:16.00px;background:#fdf0f9">1:00</div><div class="a td" style="left:183.00px;top:349.00px;width:168.00px;height:16.00px;background:#fff">6.23</div><div class="a td" style="left:351.00px;top:349.00px;width:166.00px;height:16.00px;background:#fdf0f9">1:00</div><div class="a td" style="left:517.00px;top:349.00px;width:212.00px;height:16.00px;background:#fff">4.99</div><div class="a td" style="left:729.00px;top:349.00px;width:109.00px;height:16.00px;background:#eef0fe">0:00</div><div class="a td z" style="left:838.00px;top:349.00px;width:160.00px;height:16.00px;background:#eef0fe">0.00</div><div class="a td l" style="left:20.00px;top:365.00px;width:42.00px;height:15.00px;background:#f2f2f2"><span class="w">12<span class="cj" style="font-size:7.05px;color:#484848;font-weight:500">時</span></span></div><div class="a td" style="left:62.00px;top:365.00px;width:121.00px;height:15.00px;background:#fdf0f9">1:00</div><div class="a td" style="left:183.00px;top:365.00px;width:168.00px;height:15.00px;background:#f2f2f2">6.18</div><div class="a td" style="left:351.00px;top:365.00px;width:166.00px;height:15.00px;background:#fdf0f9">1:00</div><div class="a td" style="left:517.00px;top:365.00px;width:212.00px;height:15.00px;background:#f2f2f2">4.97</div><div class="a td" style="left:729.00px;top:365.00px;width:109.00px;height:15.00px;background:#eef0fe">0:00</div><div class="a td z" style="left:838.00px;top:365.00px;width:160.00px;height:15.00px;background:#eef0fe">0.00</div><div class="a td l" style="left:20.00px;top:380.00px;width:42.00px;height:16.00px;background:#fff"><span class="w">13<span class="cj" style="font-size:7.05px;color:#484848;font-weight:500">時</span></span></div><div class="a td" style="left:62.00px;top:380.00px;width:121.00px;height:16.00px;background:#fdf0f9">1:00</div><div class="a td" style="left:183.00px;top:380.00px;width:168.00px;height:16.00px;background:#eef0fe">6.15</div><div class="a td" style="left:351.00px;top:380.00px;width:166.00px;height:16.00px;background:#fdf0f9">1:00</div><div class="a td" style="left:517.00px;top:380.00px;width:212.00px;height:16.00px;background:#fff">4.95</div><div class="a td" style="left:729.00px;top:380.00px;width:109.00px;height:16.00px;background:#eef0fe">0:00</div><div class="a td z" style="left:838.00px;top:380.00px;width:160.00px;height:16.00px;background:#eef0fe">0.00</div><div class="a td l" style="left:20.00px;top:396.00px;width:42.00px;height:16.00px;background:#f2f2f2"><span class="w">14<span class="cj" style="font-size:7.05px;color:#484848;font-weight:500">時</span></span></div><div class="a td" style="left:62.00px;top:396.00px;width:121.00px;height:16.00px;background:#fdf0f9">1:00</div><div class="a td" style="left:183.00px;top:396.00px;width:168.00px;height:16.00px;background:#fdf0f9">6.33</div><div class="a td" style="left:351.00px;top:396.00px;width:166.00px;height:16.00px;background:#fdf0f9">1:00</div><div class="a td" style="left:517.00px;top:396.00px;width:212.00px;height:16.00px;background:#fdf0f9">5.02</div><div class="a td" style="left:729.00px;top:396.00px;width:109.00px;height:16.00px;background:#eef0fe">0:00</div><div class="a td z" style="left:838.00px;top:396.00px;width:160.00px;height:16.00px;background:#eef0fe">0.00</div><div class="a td l" style="left:20.00px;top:412.00px;width:42.00px;height:15.00px;background:#fff"><span class="w">15<span class="cj" style="font-size:7.05px;color:#484848;font-weight:500">時</span></span></div><div class="a td" style="left:62.00px;top:412.00px;width:121.00px;height:15.00px;background:#fdf0f9">1:00</div><div class="a td" style="left:183.00px;top:412.00px;width:168.00px;height:15.00px;background:#fff">6.32</div><div class="a td" style="left:351.00px;top:412.00px;width:166.00px;height:15.00px;background:#fdf0f9">1:00</div><div class="a td" style="left:517.00px;top:412.00px;width:212.00px;height:15.00px;background:#fdf0f9">5.02</div><div class="a td" style="left:729.00px;top:412.00px;width:109.00px;height:15.00px;background:#eef0fe">0:00</div><div class="a td z" style="left:838.00px;top:412.00px;width:160.00px;height:15.00px;background:#eef0fe">0.00</div><div class="a td l" style="left:20.00px;top:427.00px;width:42.00px;height:16.00px;background:#f2f2f2"><span class="w">16<span class="cj" style="font-size:7.05px;color:#484848;font-weight:500">時</span></span></div><div class="a td" style="left:62.00px;top:427.00px;width:121.00px;height:16.00px;background:#fdf0f9">1:00</div><div class="a td" style="left:183.00px;top:427.00px;width:168.00px;height:16.00px;background:#f2f2f2">6.19</div><div class="a td" style="left:351.00px;top:427.00px;width:166.00px;height:16.00px;background:#fdf0f9">1:00</div><div class="a td" style="left:517.00px;top:427.00px;width:212.00px;height:16.00px;background:#f2f2f2">4.96</div><div class="a td" style="left:729.00px;top:427.00px;width:109.00px;height:16.00px;background:#eef0fe">0:00</div><div class="a td z" style="left:838.00px;top:427.00px;width:160.00px;height:16.00px;background:#eef0fe">0.00</div><div class="a td l" style="left:20.00px;top:443.00px;width:42.00px;height:15.00px;background:#fff"><span class="w">17<span class="cj" style="font-size:7.05px;color:#484848;font-weight:500">時</span></span></div><div class="a td" style="left:62.00px;top:443.00px;width:121.00px;height:15.00px;background:#fdf0f9">1:00</div><div class="a td" style="left:183.00px;top:443.00px;width:168.00px;height:15.00px;background:#fff">6.30</div><div class="a td" style="left:351.00px;top:443.00px;width:166.00px;height:15.00px;background:#fdf0f9">1:00</div><div class="a td" style="left:517.00px;top:443.00px;width:212.00px;height:15.00px;background:#fff">5.01</div><div class="a td" style="left:729.00px;top:443.00px;width:109.00px;height:15.00px;background:#eef0fe">0:00</div><div class="a td z" style="left:838.00px;top:443.00px;width:160.00px;height:15.00px;background:#eef0fe">0.00</div><div class="a td l" style="left:20.00px;top:458.00px;width:42.00px;height:16.00px;background:#f2f2f2"><span class="w">18<span class="cj" style="font-size:7.05px;color:#484848;font-weight:500">時</span></span></div><div class="a td" style="left:62.00px;top:458.00px;width:121.00px;height:16.00px;background:#fdf0f9">1:00</div><div class="a td" style="left:183.00px;top:458.00px;width:168.00px;height:16.00px;background:#f2f2f2">6.27</div><div class="a td" style="left:351.00px;top:458.00px;width:166.00px;height:16.00px;background:#fdf0f9">1:00</div><div class="a td" style="left:517.00px;top:458.00px;width:212.00px;height:16.00px;background:#f2f2f2">5.00</div><div class="a td" style="left:729.00px;top:458.00px;width:109.00px;height:16.00px;background:#eef0fe">0:00</div><div class="a td z" style="left:838.00px;top:458.00px;width:160.00px;height:16.00px;background:#eef0fe">0.00</div><div class="a td l" style="left:20.00px;top:474.00px;width:42.00px;height:15.00px;background:#fff"><span class="w">19<span class="cj" style="font-size:7.05px;color:#484848;font-weight:500">時</span></span></div><div class="a td" style="left:62.00px;top:474.00px;width:121.00px;height:15.00px;background:#fff"></div><div class="a td" style="left:183.00px;top:474.00px;width:168.00px;height:15.00px;background:#fff"></div><div class="a td" style="left:351.00px;top:474.00px;width:166.00px;height:15.00px;background:#fff"></div><div class="a td" style="left:517.00px;top:474.00px;width:212.00px;height:15.00px;background:#fff"></div><div class="a td" style="left:729.00px;top:474.00px;width:109.00px;height:15.00px;background:#fff"></div><div class="a td z" style="left:838.00px;top:474.00px;width:160.00px;height:15.00px;background:#fff"></div><div class="a td l" style="left:20.00px;top:489.00px;width:42.00px;height:16.00px;background:#f2f2f2"><span class="w">20<span class="cj" style="font-size:7.05px;color:#484848;font-weight:500">時</span></span></div><div class="a td" style="left:62.00px;top:489.00px;width:121.00px;height:16.00px;background:#f2f2f2"></div><div class="a td" style="left:183.00px;top:489.00px;width:168.00px;height:16.00px;background:#f2f2f2"></div><div class="a td" style="left:351.00px;top:489.00px;width:166.00px;height:16.00px;background:#f2f2f2"></div><div class="a td" style="left:517.00px;top:489.00px;width:212.00px;height:16.00px;background:#f2f2f2"></div><div class="a td" style="left:729.00px;top:489.00px;width:109.00px;height:16.00px;background:#f2f2f2"></div><div class="a td z" style="left:838.00px;top:489.00px;width:160.00px;height:16.00px;background:#f2f2f2"></div><div class="a td l" style="left:20.00px;top:505.00px;width:42.00px;height:15.00px;background:#fff"><span class="w">21<span class="cj" style="font-size:7.05px;color:#484848;font-weight:500">時</span></span></div><div class="a td" style="left:62.00px;top:505.00px;width:121.00px;height:15.00px;background:#fff"></div><div class="a td" style="left:183.00px;top:505.00px;width:168.00px;height:15.00px;background:#fff"></div><div class="a td" style="left:351.00px;top:505.00px;width:166.00px;height:15.00px;background:#fff"></div><div class="a td" style="left:517.00px;top:505.00px;width:212.00px;height:15.00px;background:#fff"></div><div class="a td" style="left:729.00px;top:505.00px;width:109.00px;height:15.00px;background:#fff"></div><div class="a td z" style="left:838.00px;top:505.00px;width:160.00px;height:15.00px;background:#fff"></div><div class="a" style="left:997.80px;top:126.40px;width:8.10px;height:393.60px;background:#fff"></div><svg class="ic" style="left:999px;top:130.2px" width="5.6" height="4.2" viewBox="0 0 5.6 4.2"><path d="M2.8 0.3L5.4 4H0.2Z" fill="#8a8a8a"/></svg><div class="a" style="left:999.80px;top:138.70px;width:4.10px;height:280.40px;background:#858585;border-radius:2px"></div>
</div></div>
</body></html>
